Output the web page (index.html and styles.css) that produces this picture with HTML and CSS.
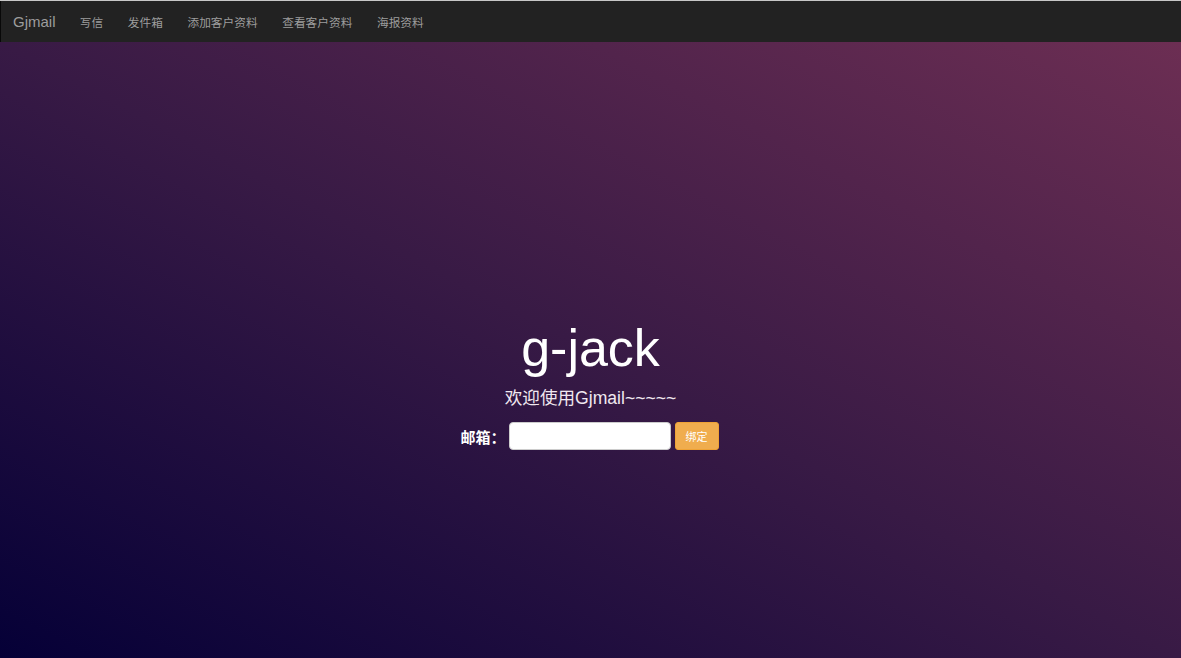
FILE: index.html
```html
<!DOCTYPE html>
<html lang="zh-CN">
<head>
<meta charset="utf-8">
<title>Gjmail</title>
<link rel="stylesheet" href="styles.css">
</head>
<body>
<div class="topline"></div>
<nav class="navbar">
  <a class="brand" href="#">Gjmail</a>
  <ul class="nav">
    <li><a href="#">写信</a></li>
    <li><a href="#">发件箱</a></li>
    <li><a href="#">添加客户资料</a></li>
    <li><a href="#">查看客户资料</a></li>
    <li><a href="#">海报资料</a></li>
  </ul>
</nav>
<main class="hero">
  <h1 class="title">g-jack</h1>
  <p class="subtitle">欢迎使用Gjmail~~~~~</p>
  <form class="bind-form">
    <label class="label">邮箱：</label>
    <input class="email" type="text">
    <button class="btn" type="button">绑定</button>
  </form>
</main>
</body>
</html>
```
FILE: styles.css
```css
html, body {
  margin: 0;
  padding: 0;
  height: 100%;
}
body {
  font-family: "Liberation Sans", "Noto Sans CJK SC", sans-serif;
  background: #1a0b3a;
  overflow: hidden;
}
.topline {
  height: 1px;
  background: #c8c8c8;
}
.navbar {
  height: 41px;
  background: #222222;
  border-left: 1px solid #080808;
  display: flex;
  align-items: center;
  box-sizing: border-box;
}
.brand {
  color: #9d9d9d;
  font-size: 15px;
  text-decoration: none;
  padding: 0 12px 0 12px;
}
.nav {
  list-style: none;
  margin: 0;
  padding: 0;
  display: flex;
}
.nav a {
  display: block;
  color: #9d9d9d;
  font-size: 11.7px;
  text-decoration: none;
  padding: 0 12.3px;
}
.hero {
  height: calc(100% - 42px);
  background: linear-gradient(to top right, #050037 0%, #381a45 50%, #6c2e53 100%);
  display: flex;
  flex-direction: column;
  align-items: center;
  padding-top: 276px;
  box-sizing: border-box;
  color: #ffffff;
}
.title {
  margin: 0;
  font-size: 52px;
  line-height: 60px;
  font-weight: normal;
}
.subtitle {
  margin: 8px 0 0 0;
  font-size: 17.6px;
  line-height: 24px;
  color: #f0e8f0;
}
.bind-form {
  margin: 12px 0 0 -2px;
  display: flex;
  align-items: center;
}
.label {
  font-size: 15px;
  font-weight: bold;
  margin-right: 3px;
}
.email {
  width: 162px;
  height: 28px;
  box-sizing: border-box;
  border: 1px solid #cccccc;
  border-radius: 4px;
  background: #ffffff;
  padding: 0 8px;
}
.btn {
  margin-left: 4px;
  width: 44px;
  height: 28px;
  border: 1px solid #eea236;
  border-radius: 3px;
  background: #f0ad4e;
  color: #ffffff;
  font-size: 11px;
  font-family: inherit;
  padding: 0;
}
```
